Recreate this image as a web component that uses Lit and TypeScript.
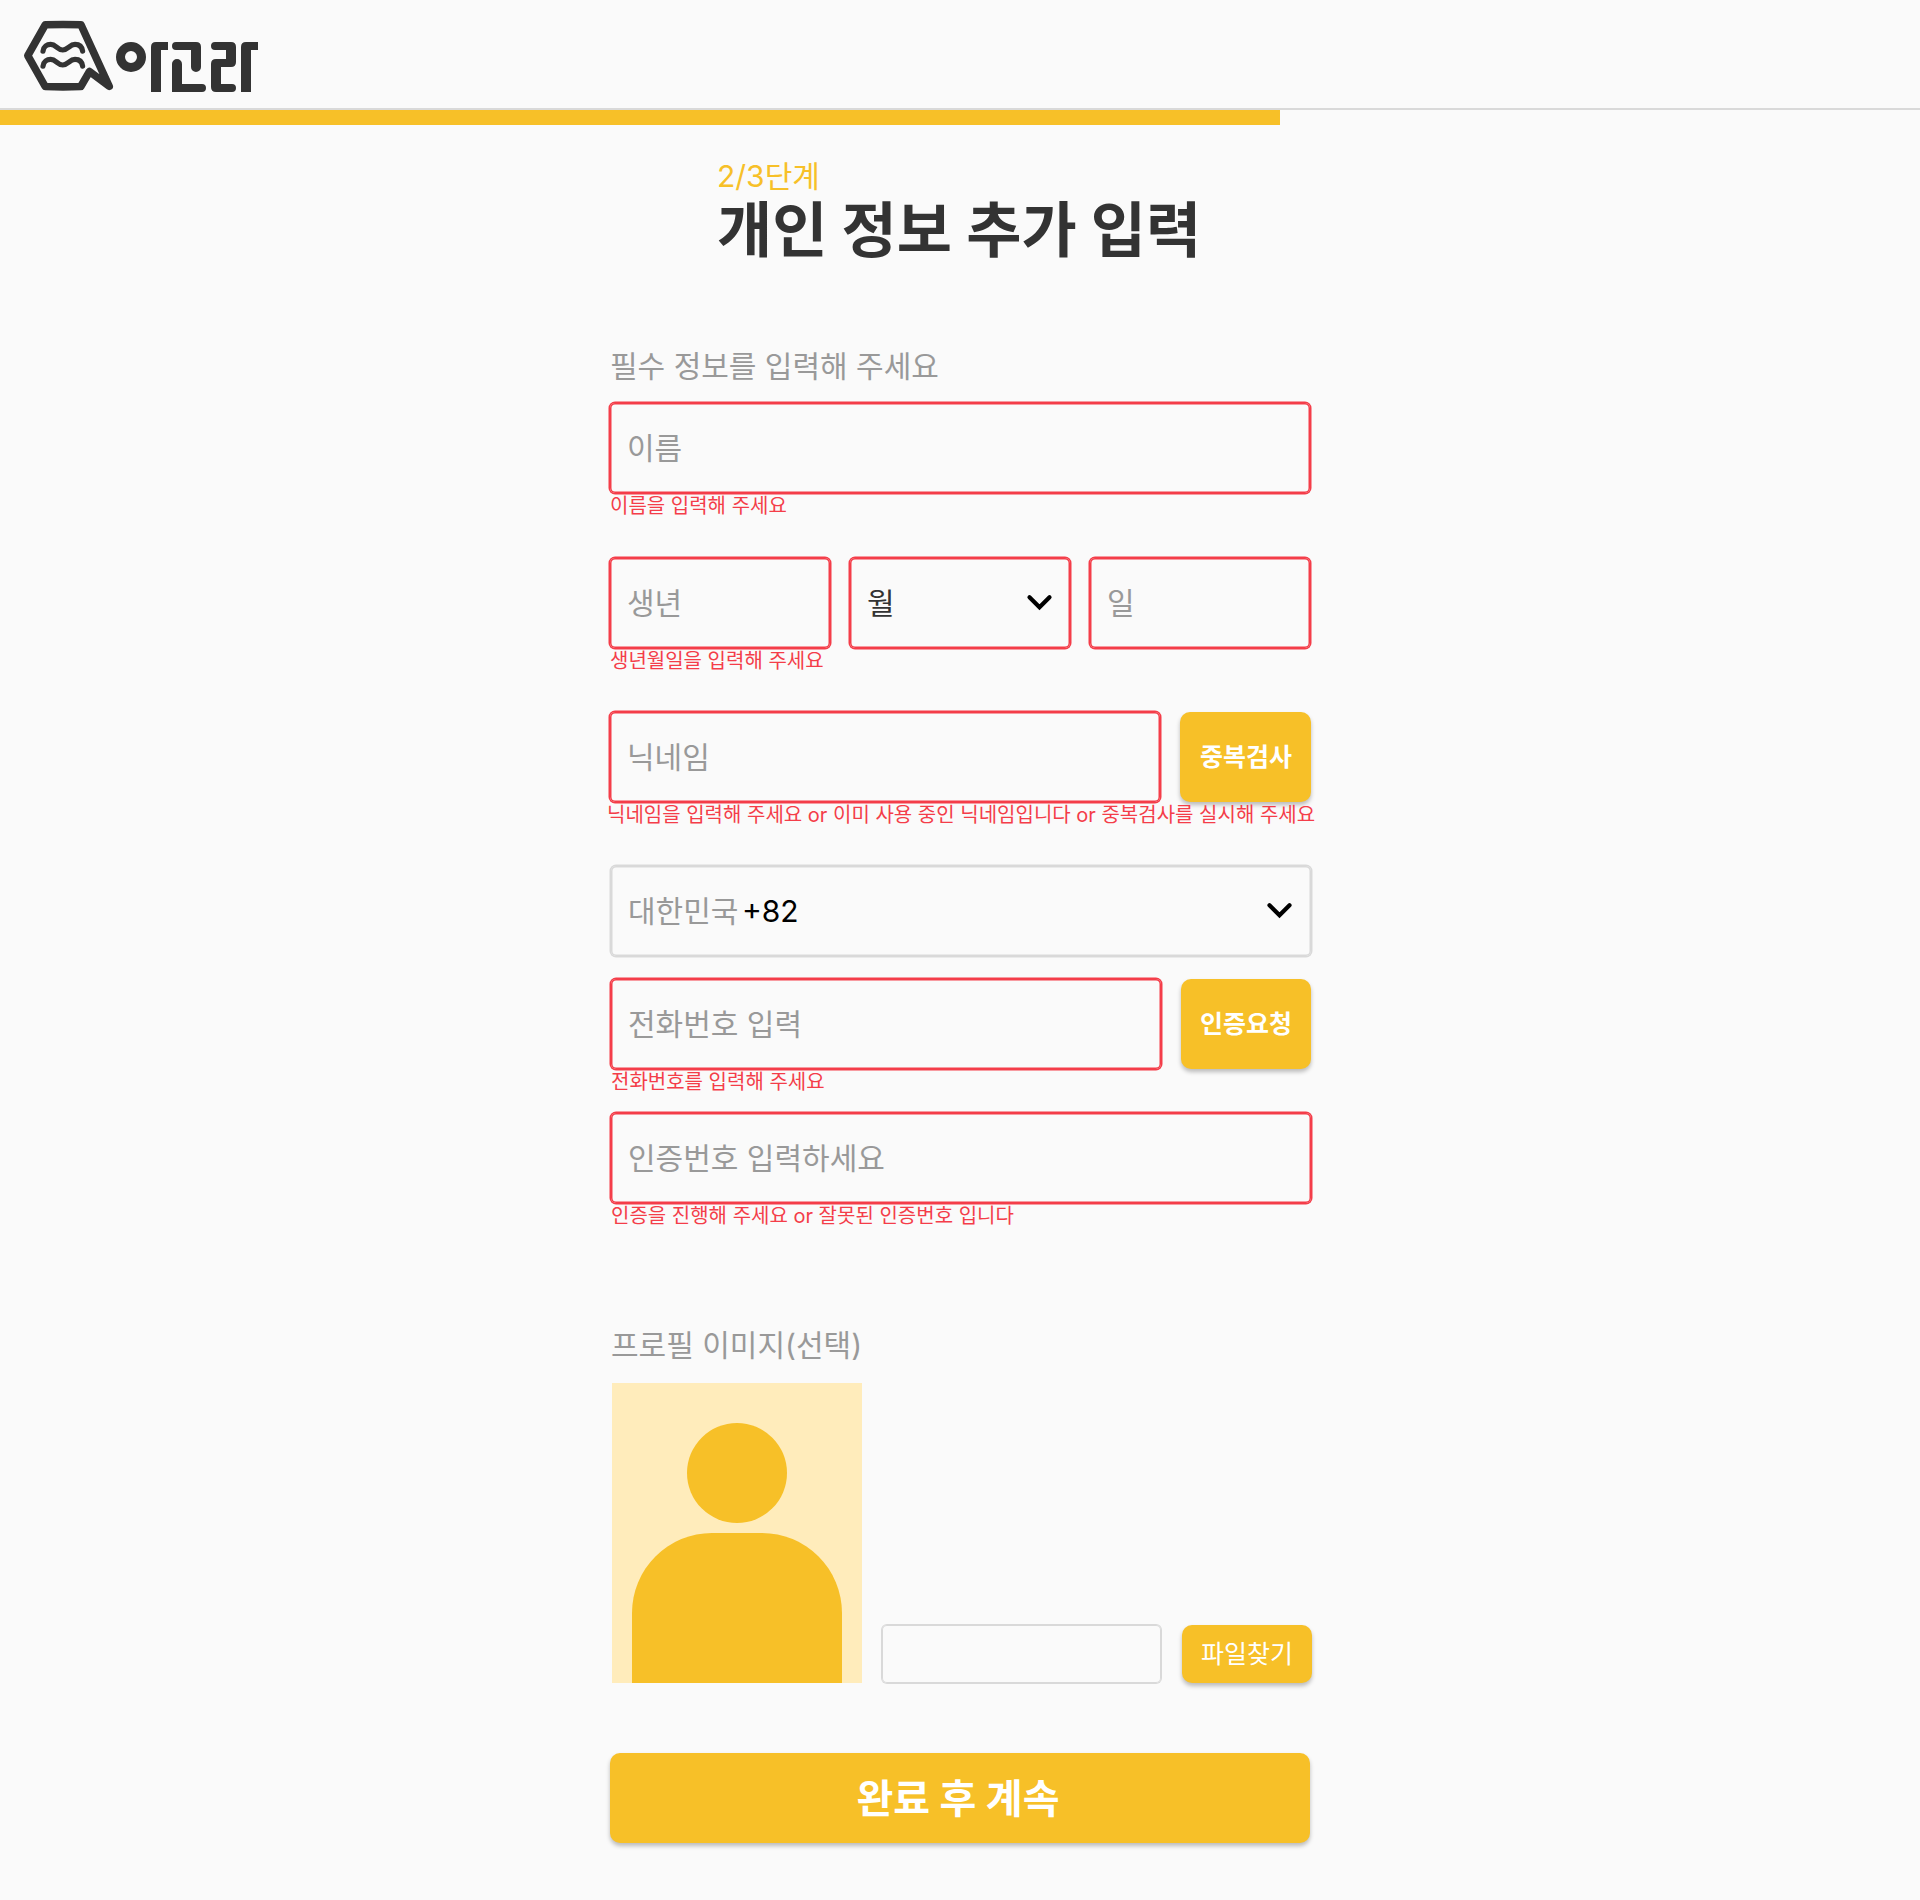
import { LitElement, html, svg, css } from "lit";
import { customElement, property } from "lit/decorators.js";

const chevron = svg`<svg class="chevron" viewBox="0 0 24 16" width="24" height="16"><path d="M1.5 2.300 11.500 12.300 21.500 2.300" fill="none" stroke="#000" stroke-width="4.200" stroke-linecap="round"/></svg>`;

@customElement("agora-logo")
export class AgoraLogo extends LitElement {
  static styles = css`
    :host { display: block; width: 236px; height: 72px; }
    svg { display: block; overflow: visible; }
    .line { fill: none; stroke: #333; stroke-width: 7.6; stroke-linejoin: round; }
    .wave { fill: none; stroke: #333; stroke-width: 5.2; stroke-linecap: round; }
    .mark { fill: #333; }
  `;
  render() {
    return html`<svg width="236" height="72" viewBox="24 20 236 72" role="img" aria-label="아고라">
      <path class="line" d="M45.2 24.8Q63 24.200 81 24.800L109.200 86.300L89.500 71.500L80.800 86.500Q63 87.200 45.200 86.500L27.800 55.700Z"/>
      <path class="wave" d="M43 51.2C43.500 46.500 47 44.400 50.700 44.400C56 44.400 57.500 50 62.800 50C68 50 69.500 44.400 75 44.400C79 44.400 82 46.500 82.600 51.200"/>
      <path class="wave" d="M43 66.2C43.500 61.500 47 59.400 50.700 59.400C56 59.400 57.500 65 62.800 65C68 65 69.500 59.400 75 59.400C79 59.400 82 61.500 82.600 66.200"/>
      <circle cx="131" cy="57" r="10.500" fill="none" stroke="#333" stroke-width="9"/>
      <path class="mark" d="M151 92V47Q151 42 156 42H168V50H161V92Z"/>
      <path class="mark" d="M176 42H196Q201 42 201 47V67A5 5 0 0 1 191 67V50H176A4 4 0 0 1 176 42Z"/>
      <path class="mark" d="M172 92V64A5 5 0 0 1 182 64V84H202A4 4 0 0 1 202 92Z"/>
      <path class="mark" d="M215 42H231Q236 42 236 47V62Q236 67 231 67H221V84H232A4 4 0 0 1 232 92H216Q211 92 211 87V64Q211 59 216 59H226V50H215A4 4 0 0 1 215 42Z"/>
      <path class="mark" d="M241 92V47Q241 42 246 42H258V50H251V92Z"/>
    </svg>`;
  }
}

@customElement("form-field")
export class FormField extends LitElement {
  @property() error = "";
  static styles = css`
    :host { display: block; }
    .row { display: flex; gap: 20px; height: 90px; }
    .error { height: 28px; margin: -1px 0 0 0; font-size: 20px; line-height: 28px; color: #f43d49; white-space: nowrap; }
  `;
  render() {
    return html`<div class="row"><slot></slot></div>
      ${this.error ? html`<div class="error" part="error">${this.error}</div>` : ""}`;
  }
}

@customElement("app-root")
export class AppRoot extends LitElement {
  static styles = css`
    :host {
      display: block;
      height: 1900px;
      background: #fafafa;
      color: #333;
      font-family: Inter, "Noto Sans CJK KR", sans-serif;
      font-size: 30px;
      overflow: hidden;
    }
    * { box-sizing: border-box; }
    .header { height: 110px; padding: 20px 24px 0; border-bottom: 2px solid #d9d9d9; }
    .progress { width: 66.6667%; height: 15px; background: #f7c028; }
    .heading { width: 484px; margin: 29px auto 0 717px; }
    .step { height: 43px; line-height: 44px; color: #f7c028; }
    .title { margin: 0; height: 66px; line-height: 66px; font-size: 60px; font-weight: 700; white-space: nowrap; }
    .form { width: 702px; margin: 81px 0 0 610px; display: flex; flex-direction: column; }
    .label { height: 44px; line-height: 44px; color: #999; }
    .name { margin-top: 15px; }
    .birth { margin-top: 38px; }
    .nick { margin-top: 37px; }
    .nick::part(error) { margin-left: -3px; }
    .country { margin: 37px 0 0 1px; }
    .phone { margin: 23px 0 0 1px; }
    .cert { margin: 17px 0 0 1px; }
    .box {
      display: flex; align-items: center; height: 90px; padding: 0 18px 0 17px; border-radius: 5px; color: #999;
      box-shadow: 0 0 0 1.5px #f43d49, inset 0 0 0 1.5px #f43d49;
      line-height: 44px; white-space: nowrap;
    }
    .plain { padding-right: 19px; box-shadow: 0 0 0 1.5px #d9d9d9, inset 0 0 0 1.5px #d9d9d9; }
    .full { width: 700px; }
    .third { width: 220px; }
    .wide { width: 550px; }
    .dark { color: #333; }
    .code { margin-left: 3.5px; color: #000; }
    .chevron { margin-left: auto; overflow: visible; }
    .btn {
      display: flex; align-items: center; justify-content: center; height: 90px; width: 130px; padding: 0;
      border: 0; border-radius: 10px; background: #f7c028; color: #fff;
      font: 700 25px/30px Inter, "Noto Sans CJK KR", sans-serif;
      box-shadow: 0 3px 4px rgba(0, 0, 0, 0.25); white-space: nowrap;
    }
    .check { width: 131px; padding-left: 1px; }
    .find { height: 58px; font-weight: 400; margin-left: 21px; }
    .photo-label { margin: 93px 0 0 1px; }
    .upload { display: flex; align-items: flex-end; margin: 16px 0 0 2px; height: 300px; }
    .photo { display: block; }
    .file { width: 279px; height: 58px; margin-left: 20px; border-radius: 5px; box-shadow: 0 0 0 1px #d9d9d9, inset 0 0 0 1px #d9d9d9; }
    .submit { width: 700px; margin-top: 70px; padding: 1px 4px 0 0; font-size: 40px; line-height: 48px; }
  `;
  render() {
    return html`
      <header class="header"><agora-logo></agora-logo></header>
      <div class="progress"></div>
      <div class="heading">
        <div class="step">2/3단계</div>
        <h1 class="title">개인 정보 추가 입력</h1>
      </div>
      <main class="form">
        <div class="label">필수 정보를 입력해 주세요</div>
        <form-field class="name" error="이름을 입력해 주세요"><div class="box full">이름</div></form-field>
        <form-field class="birth" error="생년월일을 입력해 주세요">
          <div class="box third">생년</div>
          <div class="box third dark">월${chevron}</div>
          <div class="box third">일</div>
        </form-field>
        <form-field class="nick" error="닉네임을 입력해 주세요 or 이미 사용 중인 닉네임입니다 or 중복검사를 실시해 주세요">
          <div class="box wide">닉네임</div>
          <button class="btn check">중복검사</button>
        </form-field>
        <form-field class="country">
          <div class="box full plain"><span>대한민국</span><span class="code">+82</span>${chevron}</div>
        </form-field>
        <form-field class="phone" error="전화번호를 입력해 주세요">
          <div class="box wide">전화번호 입력</div>
          <button class="btn">인증요청</button>
        </form-field>
        <form-field class="cert" error="인증을 진행해 주세요 or 잘못된 인증번호 입니다"><div class="box full">인증번호 입력하세요</div></form-field>
        <div class="label photo-label">프로필 이미지(선택)</div>
        <div class="upload">
          <svg class="photo" width="250" height="300" viewBox="0 0 250 300">
            <rect width="250" height="300" fill="#ffecbb"/>
            <circle cx="125" cy="90" r="50" fill="#f7c028"/>
            <path d="M20 300V230A80 80 0 0 1 100 150H150A80 80 0 0 1 230 230V300Z" fill="#f7c028"/>
          </svg>
          <div class="file"></div>
          <button class="btn find">파일찾기</button>
        </div>
        <button class="btn submit">완료 후 계속</button>
      </main>`;
  }
}
